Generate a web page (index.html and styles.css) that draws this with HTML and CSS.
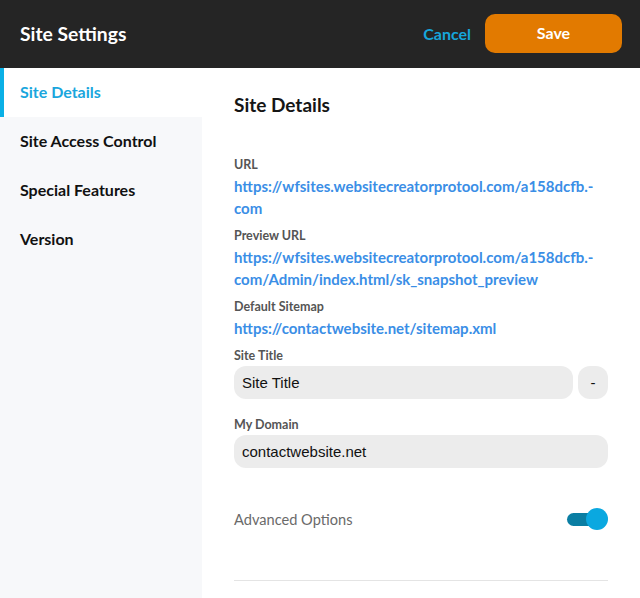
FILE: index.html
```html
<!DOCTYPE html>
<html>
<head>
<meta charset="utf-8">
<link rel="stylesheet" href="styles.css">
</head>
<body>
<header class="topbar">
  <div class="title">Site Settings</div>
  <div class="actions">
    <span class="cancel">Cancel</span>
    <button class="save">Save</button>
  </div>
</header>
<div class="layout">
  <nav class="sidebar">
    <div class="nav-item active">Site Details</div>
    <div class="nav-item">Site Access Control</div>
    <div class="nav-item">Special Features</div>
    <div class="nav-item">Version</div>
  </nav>
  <main class="main">
    <h1 class="heading">Site Details</h1>
    <div class="field">
      <div class="label">URL</div>
      <div class="link">https://wfsites.websitecreatorprotool.com/a158dcfb.-<br>com</div>
    </div>
    <div class="field">
      <div class="label">Preview URL</div>
      <div class="link">https://wfsites.websitecreatorprotool.com/a158dcfb.-<br>com/Admin/index.html/sk_snapshot_preview</div>
    </div>
    <div class="field">
      <div class="label">Default Sitemap</div>
      <div class="link">https://contactwebsite.net/sitemap.xml</div>
    </div>
    <div class="field input-field">
      <div class="label">Site Title</div>
      <div class="input-row">
        <div class="input grow">Site Title</div>
        <div class="input dash">-</div>
      </div>
    </div>
    <div class="field input-field">
      <div class="label">My Domain</div>
      <div class="input">contactwebsite.net</div>
    </div>
    <div class="advanced">
      <span class="adv-label">Advanced Options</span>
      <span class="toggle"><span class="track"></span><span class="knob"></span></span>
    </div>
    <div class="divider"></div>
  </main>
</div>
</body>
</html>
```
FILE: styles.css
```css
html, body {
  margin: 0;
  padding: 0;
  background: #ffffff;
  font-family: Lato, "Open Sans", sans-serif;
}
.topbar {
  height: 68px;
  background: #252525;
  display: flex;
  align-items: center;
  justify-content: space-between;
  padding: 0 18px 0 20px;
  box-sizing: border-box;
}
.title {
  color: #ffffff;
  font-size: 19.3px;
  font-weight: 700;
  margin-bottom: 1px;
}
.actions {
  display: flex;
  align-items: center;
  margin-bottom: 1px;
}
.cancel {
  color: #16a6dc;
  font-size: 16px;
  font-weight: 700;
  margin-right: 14px;
}
.save {
  width: 137px;
  height: 39px;
  background: #e27a00;
  border: none;
  border-radius: 10px;
  color: #ffffff;
  font-family: Lato, sans-serif;
  font-size: 16px;
  font-weight: 700;
  padding: 0 0 2px 0;
}
.layout {
  display: flex;
  height: 530px;
}
.sidebar {
  width: 202px;
  background: #f7f8fa;
  flex-shrink: 0;
}
.nav-item {
  height: 49px;
  display: flex;
  align-items: center;
  padding-left: 20px;
  padding-bottom: 2px;
  font-size: 16px;
  font-weight: 700;
  color: #111111;
  box-sizing: border-box;
}
.nav-item.active {
  background: #ffffff;
  color: #1aa6dd;
  border-left: 4px solid #0ab0e6;
  padding-left: 16px;
}
.main {
  flex: 1;
  padding: 25px 32px 0 32px;
}
.heading {
  margin: 0 0 38px 0;
  font-size: 19px;
  font-weight: 700;
  color: #151515;
  line-height: 24px;
}
.field {
  margin-bottom: 7px;
}
.field.input-field {
  margin-bottom: 16px;
}
.label {
  font-size: 12.5px;
  font-weight: 700;
  color: #555555;
  line-height: 16px;
  padding-top: 2px;
}
.link {
  font-size: 15px;
  font-weight: 700;
  color: #3a8ee6;
  line-height: 22px;
  margin-top: 2px;
}
.input-row {
  display: flex;
  gap: 5px;
  margin-top: 2px;
}
.input-row .input {
  margin-top: 0;
}
.input {
  height: 33px;
  background: #ececec;
  border-radius: 12px;
  font-family: "Liberation Sans", Arial, sans-serif;
  font-size: 15px;
  color: #111111;
  display: flex;
  align-items: center;
  padding-left: 8px;
  box-sizing: border-box;
  margin-top: 2px;
}
.grow {
  flex: 1;
}
.dash {
  width: 30px;
  padding-left: 0;
  justify-content: center;
}
.advanced {
  display: flex;
  align-items: center;
  justify-content: space-between;
  margin-top: 39px;
  height: 24px;
}
.adv-label {
  font-size: 14.6px;
  color: #6a6a6a;
}
.toggle {
  position: relative;
  width: 41px;
  height: 22px;
  display: block;
}
.track {
  position: absolute;
  left: 0;
  top: 5px;
  width: 36px;
  height: 13px;
  border-radius: 7px;
  background: #0a7ea3;
}
.knob {
  position: absolute;
  right: 0;
  top: 0;
  width: 22px;
  height: 22px;
  border-radius: 50%;
  background: #0aa8e0;
}
.divider {
  margin-top: 49px;
  border-top: 1px solid #e4e4e4;
}
```
